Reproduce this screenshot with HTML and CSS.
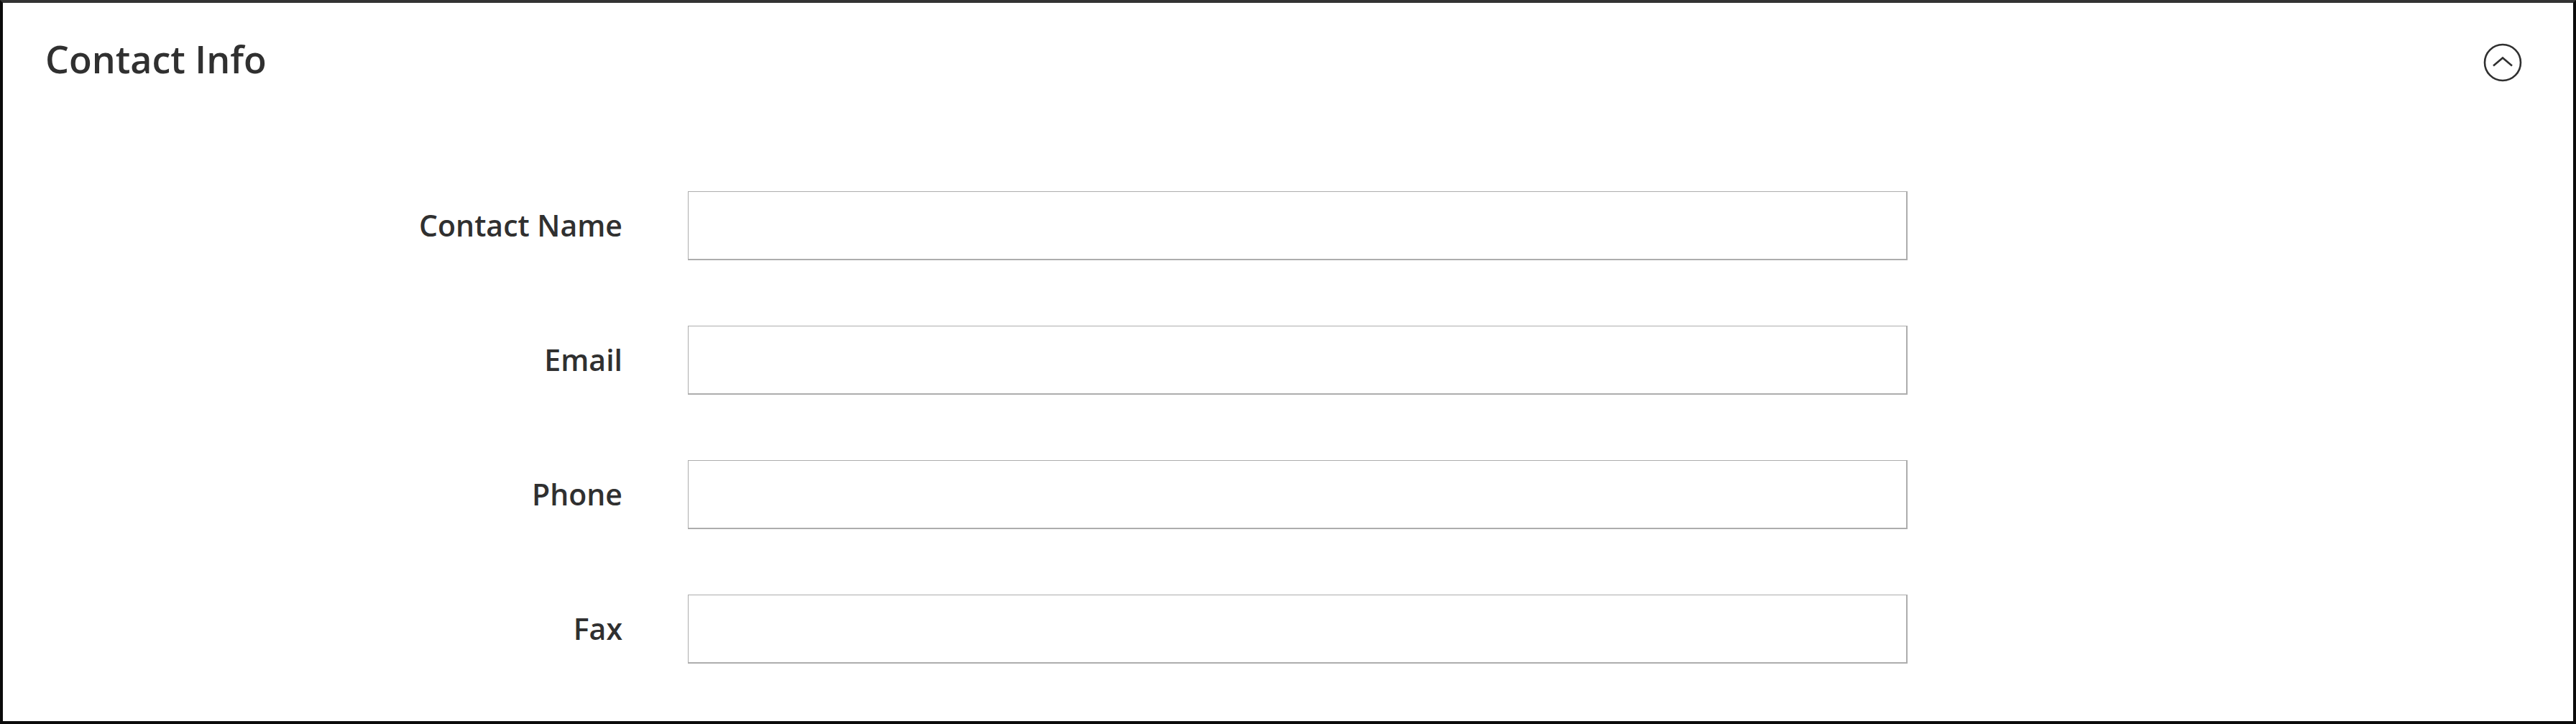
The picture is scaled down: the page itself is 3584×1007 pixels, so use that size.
FILE: index.html
```html
<!doctype html>
<html lang="en">
  <head>
    <meta charset="UTF-8" />
    <meta name="viewport" content="width=device-width, initial-scale=1.0" />
    <title>Contact Info</title>
    <link rel="stylesheet" href="styles.css">
  </head>
  <body>
    <div class="fieldset-wrapper">
      <div class="fieldset-header">
        <div class="fieldset-title">Contact Info</div>
        <span class="toggle">
          <svg width="54" height="54" viewBox="0 0 54 54">
            <circle cx="27" cy="27" r="25" fill="none" stroke="#303030" stroke-width="2.6" />
            <polyline points="14,31.5 27,20.5 40,31.5" fill="none" stroke="#303030" stroke-width="2.6" />
          </svg>
        </span>
      </div>
      <div class="fieldset">
        <div class="field">
          <label class="label" for="contact-name">Contact Name</label>
          <input class="input-text" id="contact-name" type="text" />
        </div>
        <div class="field">
          <label class="label" for="email">Email</label>
          <input class="input-text" id="email" type="text" />
        </div>
        <div class="field">
          <label class="label" for="phone">Phone</label>
          <input class="input-text" id="phone" type="text" />
        </div>
        <div class="field">
          <label class="label" for="fax">Fax</label>
          <input class="input-text" id="fax" type="text" />
        </div>
      </div>
    </div>
  </body>
</html>
```

FILE: styles.css
```css
* {
  margin: 0;
  padding: 0;
  box-sizing: border-box;
}
body {
  background: #fff;
  font-family: "Open Sans", "Noto Sans", sans-serif;
  color: #303030;
}
.fieldset-wrapper {
  width: 3584px;
  height: 1007px;
  border: 4px solid #0b0b0b;
  border-top-color: #333;
  background: #fff;
}
.fieldset-header {
  display: flex;
  justify-content: space-between;
  align-items: flex-start;
  padding: 43px 71px 0 59px;
}
.fieldset-title {
  font-size: 52px;
  font-weight: 600;
  line-height: 1.362;
}
.toggle {
  display: block;
  margin-top: 13px;
}
.toggle svg {
  display: block;
}
.fieldset {
  display: flex;
  flex-direction: column;
  gap: 91px;
  padding-top: 148px;
}
.field {
  display: grid;
  grid-template-columns: 862px 1697px;
  column-gap: 91px;
  align-items: center;
}
.label {
  text-align: right;
  font-size: 41px;
  font-weight: 600;
  line-height: 1.362;
}
.input-text {
  height: 96px;
  width: 1697px;
  border: 1px solid #adadad;
  border-right-width: 2px;
  border-bottom-width: 2px;
  background: #fff;
  font-family: inherit;
  font-size: 42px;
}
```
